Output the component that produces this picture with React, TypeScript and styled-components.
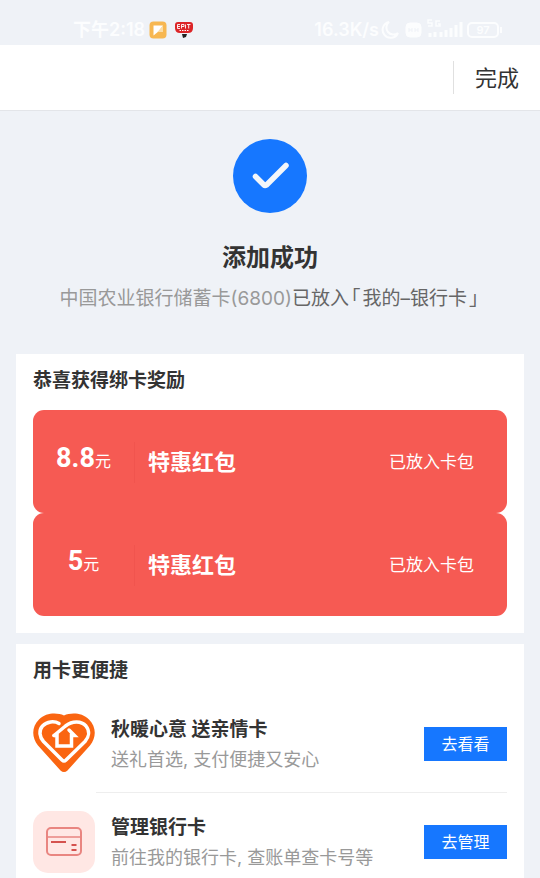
import React from "react";
import styled, { createGlobalStyle } from "styled-components";

const GlobalStyle = createGlobalStyle`
  * { box-sizing: border-box; }
  body {
    margin: 0;
    background: #eff2f7;
    color: #333;
    font-family: Inter, "Noto Sans CJK SC", sans-serif;
  }
  h1, h2, h3, p, ul { margin: 0; padding: 0; }
  button { font-family: inherit; border: 0; cursor: pointer; }
`;

const StatusBar = styled.header`
  display: flex;
  justify-content: space-between;
  align-items: flex-end;
  height: 45px;
  padding: 0 37px 3px 73px;
  color: #fcfdfe;
  font-size: 18px;
  line-height: 24px;
  font-weight: 600;
`;

const StatusGroup = styled.div<{ $gap: number }>`
  display: flex;
  align-items: center;
  gap: ${(p) => p.$gap}px;
`;

const AppIcons = styled.div`
  display: flex;
  align-items: center;
  gap: 7px;
`;

const NavBar = styled.nav`
  display: flex;
  justify-content: flex-end;
  align-items: center;
  height: 66px;
  background: #fff;
  border-bottom: 1px solid #e3e5e9;
`;

const DoneButton = styled.button`
  height: 33px;
  padding: 2px 21px 0;
  border-left: 1px solid #e0e0e0;
  background: none;
  color: #333;
  font-size: 22px;
  line-height: 31px;
`;

const Hero = styled.section`
  display: flex;
  flex-direction: column;
  align-items: center;
  padding: 28px 16px 40px;
`;

const HeroTitle = styled.h1`
  margin-top: 27px;
  font-size: 24px;
  line-height: 36px;
  font-weight: 700;
`;

const HeroText = styled.p`
  margin-top: 8px;
  color: #666;
  font-size: 19px;
  line-height: 30px;
  white-space: nowrap;
`;

const Muted = styled.span`
  color: #999;
`;

const Bracket = styled.span`
  padding: 0 2px;
  font-feature-settings: "halt";
`;

const Sections = styled.main`
  display: flex;
  flex-direction: column;
  gap: 11px;
  padding: 0 16px;
`;

const Card = styled.section`
  padding: 13px 17px 17px;
  background: #fff;
`;

const CardTitle = styled.h2`
  font-size: 19px;
  line-height: 28px;
  font-weight: 700;
`;

const CouponList = styled.ul`
  margin-top: 15px;
  list-style: none;
`;

const Coupon = styled.li`
  display: flex;
  align-items: center;
  height: 103px;
  padding: 1px 33px 0 0;
  border-radius: 11px;
  background: #f65a53;
  color: #fff;
`;

const Amount = styled.div`
  width: 102px;
  padding-bottom: 6px;
  border-right: 1px solid #f1544e;
  text-align: center;
  font-size: 16px;
  line-height: 32px;
`;

const Figure = styled.strong`
  font-family: Roboto, sans-serif;
  font-size: 27px;
  font-weight: 700;
`;

const CouponName = styled.h3`
  flex: 1;
  margin-left: 13px;
  font-size: 22px;
  line-height: 32px;
  font-weight: 700;
`;

const CouponState = styled.span`
  font-size: 17px;
  line-height: 26px;
`;

const ServiceList = styled.ul`
  margin-top: 10px;
  list-style: none;
`;

const Service = styled.li`
  display: flex;
  align-items: stretch;
  height: 98px;
  gap: 1px;
`;

const ServiceIcon = styled.div`
  display: flex;
  align-items: center;
  width: 62px;
`;

const ServiceBody = styled.div<{ $last?: boolean }>`
  flex: 1;
  display: flex;
  align-items: center;
  padding-left: 15px;
  border-bottom: 1px solid ${(p) => (p.$last ? "transparent" : "#eee")};
`;

const ServiceText = styled.div`
  flex: 1;
  padding-top: 3px;
`;

const ServiceName = styled.h3`
  font-size: 19px;
  line-height: 30px;
  font-weight: 700;
`;

const ServiceHint = styled.p`
  color: #999;
  font-size: 18px;
  line-height: 30px;
`;

const ActionButton = styled.button`
  width: 83px;
  height: 34px;
  padding: 0;
  background: #1677ff;
  color: #fff;
  font-size: 16px;
  line-height: 34px;
`;

const NoteIcon = () => (
  <svg width="18" height="18" viewBox="0 0 18 18" aria-hidden="true">
    <rect x="0.5" y="0.5" width="17" height="17" rx="4" fill="#f7b751" />
    <path d="M4.5 4.500h9.500L10 10 4.500 14.500z" fill="#fff" />
    <path d="M14 4.500v6.500H8.500z" fill="#fbdca6" />
  </svg>
);

const SpeechIcon = () => (
  <svg width="20" height="18" viewBox="0 0 20 18" aria-hidden="true">
    <path d="M4 1h12q3 0 3 3v3q0 5-5 5H6Q1 12 1 7V4q0-3 3-3z" fill="#dc2528" />
    <path d="M6 3.500H3.500v4H6M3.500 5.500H6M7.500 7.500v-4h2.500v2H7.500M11.500 3.500v4M13 3.500h3.500M14.700 3.500v4" stroke="#fff" strokeWidth="0.900" fill="none" />
    <path d="M5.500 9.500h9" stroke="#fff" fill="none" strokeDasharray="1.500 1" />
    <path d="M8 13h5l-1 3-3 1z" fill="#222" />
  </svg>
);

const SignalIcons = () => (
  <svg width="122" height="24" viewBox="0 0 122 24" fill="none" stroke="#fcfdfe" aria-hidden="true">
    <path d="M8 4A8 8 0 1 0 17 15A7 7 0 0 1 8 4z" strokeWidth="2" />
    <rect x="25" y="5" width="15" height="14" rx="4" fill="#fcfdfe" />
    <path d="M28 10v4M31 10v4M28 12h3M34 10v4M37 10v4M34 12h3" stroke="#eff2f7" />
    <path d="M51 2h-4v3h4v3h-4M59 3h-4v5h4V6h-2" strokeWidth="1.500" />
    <path d="M49 19v-4M54 19v-5M60 19v-5M65 19v-7M70 19v-9M75 19V7M80 19V4" strokeWidth="3" />
    <rect x="87" y="5" width="30" height="14" rx="4" strokeWidth="2" />
    <path d="M120 9v6" strokeWidth="2" />
    <text x="102" y="16" textAnchor="middle" fontSize="11" fill="#fcfdfe" stroke="none">97</text>
  </svg>
);

const SuccessIcon = () => (
  <svg width="74" height="74" viewBox="0 0 74 74" aria-hidden="true">
    <circle cx="37" cy="37" r="37" fill="#1677ff" />
    <path d="M22.500 37.500 31 46q1 1 2.500 0L53 26.500" fill="none" stroke="#f3f6fa" strokeWidth="5.500" strokeLinecap="round" strokeLinejoin="round" />
  </svg>
);

const HeartIcon = () => (
  <svg width="62" height="62" viewBox="0 0 62 62" aria-hidden="true">
    <path d="M31 2.500C38-.5 49-.5 56 6.500c7.500 7.500 7.500 18 1 26L34.500 57.500q-3.500 3-7 0L5 32.500C-1.500 24.500-1.500 14 6 6.500 13-.5 24-.5 31 2.500z" fill="#fa6511" />
    <path d="M21 22.500 32.500 13C39.500 7.500 48.500 8 53 13c4 5 3 11-1 15.500L33 47q-2 2-4 0L10.500 28.500C6.500 24 5.500 17.500 9.500 13 14 8.500 21 7.500 26 10.500" fill="none" stroke="#fff" strokeWidth="3.500" strokeLinecap="round" strokeLinejoin="round" />
    <path d="M21 22.500h3v10.500h14.500V22.500h3L36 17" fill="none" stroke="#fff" strokeWidth="3.500" strokeLinecap="round" strokeLinejoin="miter" />
  </svg>
);

const BankCardIcon = () => (
  <svg width="62" height="62" viewBox="0 0 62 62" fill="none" aria-hidden="true">
    <rect width="62" height="62" rx="15" fill="#ffe7e4" />
    <rect x="14" y="17" width="34" height="27" rx="4" stroke="#e98580" strokeWidth="2" />
    <path d="M14 26h34" stroke="#e98580" strokeWidth="1.500" />
    <path d="M18 31h15M38.500 34h5M38.500 39h5" stroke="#d5524e" strokeWidth="2" />
  </svg>
);

const coupons = ["8.8", "5"];

const services = [
  { name: "秋暖心意 送亲情卡", hint: "送礼首选, 支付便捷又安心", action: "去看看", Icon: HeartIcon },
  { name: "管理银行卡", hint: "前往我的银行卡, 查账单查卡号等", action: "去管理", Icon: BankCardIcon },
];

export default function App() {
  return (
    <>
      <GlobalStyle />
      <StatusBar>
        <StatusGroup $gap={4}>
          <span>下午2:18</span>
          <AppIcons>
            <NoteIcon />
            <SpeechIcon />
          </AppIcons>
        </StatusGroup>
        <StatusGroup $gap={2}>
          <span>16.3K/s</span>
          <SignalIcons />
        </StatusGroup>
      </StatusBar>
      <NavBar>
        <DoneButton>完成</DoneButton>
      </NavBar>
      <Hero>
        <SuccessIcon />
        <HeroTitle>添加成功</HeroTitle>
        <HeroText>
          <Muted>中国农业银行储蓄卡(6800)</Muted>已放入<Bracket>「</Bracket>我的–银行卡<Bracket>」</Bracket>
        </HeroText>
      </Hero>
      <Sections>
        <Card>
          <CardTitle>恭喜获得绑卡奖励</CardTitle>
          <CouponList>
            {coupons.map((value) => (
              <Coupon key={value}>
                <Amount>
                  <Figure>{value}</Figure>元
                </Amount>
                <CouponName>特惠红包</CouponName>
                <CouponState>已放入卡包</CouponState>
              </Coupon>
            ))}
          </CouponList>
        </Card>
        <Card>
          <CardTitle>用卡更便捷</CardTitle>
          <ServiceList>
            {services.map(({ name, hint, action, Icon }, i) => (
              <Service key={name}>
                <ServiceIcon>
                  <Icon />
                </ServiceIcon>
                <ServiceBody $last={i === services.length - 1}>
                  <ServiceText>
                    <ServiceName>{name}</ServiceName>
                    <ServiceHint>{hint}</ServiceHint>
                  </ServiceText>
                  <ActionButton>{action}</ActionButton>
                </ServiceBody>
              </Service>
            ))}
          </ServiceList>
        </Card>
      </Sections>
    </>
  );
}
